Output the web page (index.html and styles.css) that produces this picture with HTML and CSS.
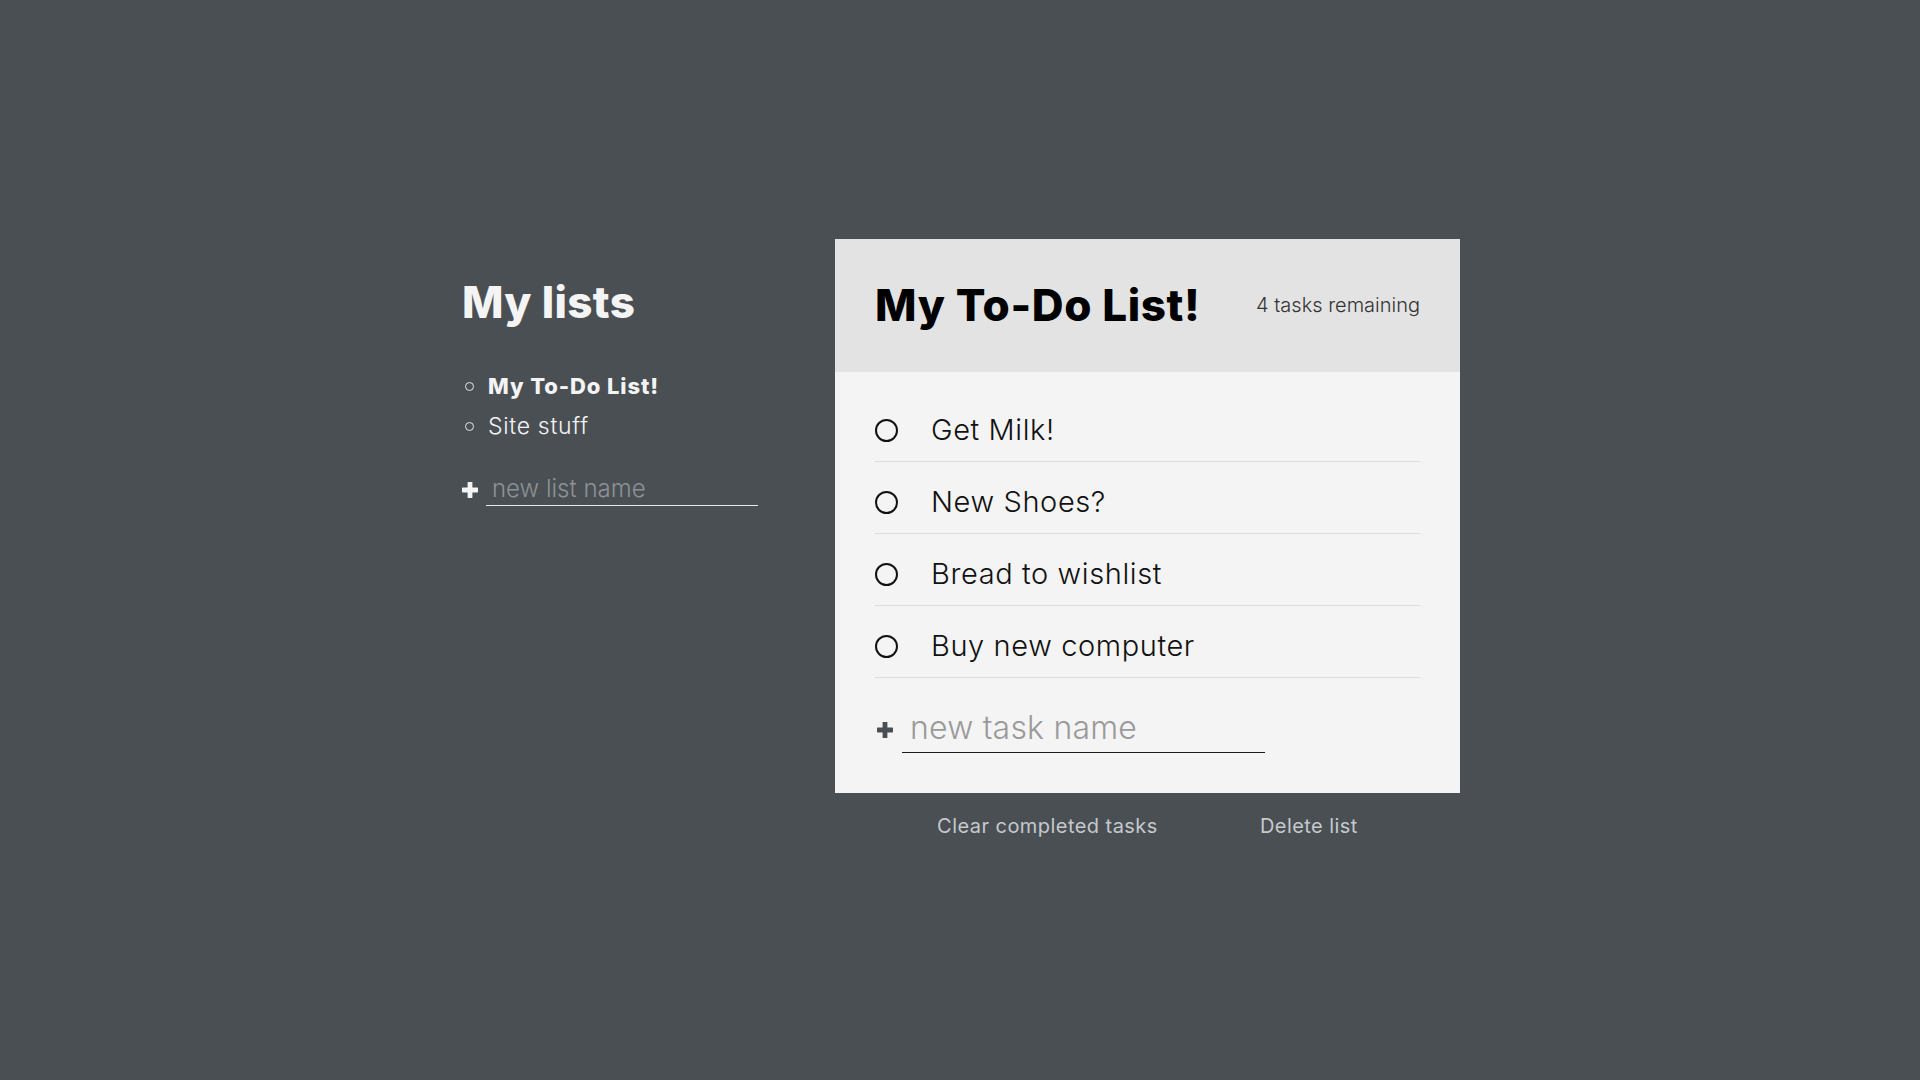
FILE: index.html
```html
<!DOCTYPE html>
<html lang="en">
<head>
<meta charset="utf-8">
<title>To-Do</title>
<link rel="stylesheet" href="styles.css">
</head>
<body>
<div class="app">
  <aside class="lists">
    <h2 class="lists-title">My lists</h2>
    <ul class="list-nav">
      <li class="list-item active">My To-Do List!</li>
      <li class="list-item">Site stuff</li>
    </ul>
    <form class="new-form new-list">
      <span class="plus plus-light"><svg viewBox="0 0 16 16" width="16" height="16"><rect x="5.6" y="0" width="4.8" height="16" rx="0.6"/><rect x="0" y="5.6" width="16" height="4.8" rx="0.6"/></svg></span>
      <input class="new-input list-input" type="text" placeholder="new list name">
    </form>
  </aside>

  <main class="todo">
    <div class="card">
      <header class="card-header">
        <h1 class="card-title">My To-Do List!</h1>
        <p class="remaining">4 tasks remaining</p>
      </header>
      <div class="card-body">
        <div class="task"><span class="check"></span><span class="task-name">Get Milk!</span></div>
        <div class="task"><span class="check"></span><span class="task-name">New Shoes?</span></div>
        <div class="task"><span class="check"></span><span class="task-name">Bread to wishlist</span></div>
        <div class="task"><span class="check"></span><span class="task-name">Buy new computer</span></div>
        <form class="new-form new-task">
          <span class="plus plus-dark"><svg viewBox="0 0 16 16" width="16" height="16"><rect x="5.6" y="0" width="4.8" height="16" rx="0.6"/><rect x="0" y="5.6" width="16" height="4.8" rx="0.6"/></svg></span>
          <input class="new-input task-input" type="text" placeholder="new task name">
        </form>
      </div>
    </div>
    <div class="actions">
      <button class="action" type="button">Clear completed tasks</button>
      <button class="action" type="button">Delete list</button>
    </div>
  </main>
</div>
</body>
</html>
```

FILE: styles.css
```css
* { box-sizing: border-box; }

html, body {
  margin: 0;
  padding: 0;
}

body {
  background: #4a4f54;
  font-family: Inter, "Open Sans", "Liberation Sans", sans-serif;
  color: #f4f4f4;
  min-height: 1080px;
}

.app {
  display: flex;
  justify-content: center;
  align-items: flex-start;
  padding-top: 239px;
  padding-left: 2px;
}

/* left column */
.lists {
  width: 373px;
  flex: none;
}

.lists-title {
  margin: 41px 0 0;
  font-size: 44px;
  line-height: 44px;
  font-weight: 800;
  letter-spacing: 0.3px;
  color: #f4f4f4;
}

.list-nav {
  list-style: none;
  margin: 42px 0 0;
  padding: 0;
}

.list-item {
  display: flex;
  align-items: center;
  gap: 14px;
  font-size: 23px;
  line-height: 40px;
  font-weight: 300;
  letter-spacing: 0.7px;
  padding-left: 3px;
}

.list-item::before {
  content: "";
  width: 7px;
  height: 7px;
  border: 1px solid #e6e6e6;
  border-radius: 50%;
  flex: none;
}

.list-item.active {
  font-weight: 800;
  font-size: 22px;
  letter-spacing: 0.9px;
}

.new-form {
  display: flex;
  align-items: center;
}

.new-list {
  margin-top: 27px;
  gap: 8px;
}

.plus {
  display: flex;
  width: 16px;
  height: 16px;
  flex: none;
}

.plus-light svg { fill: #f4f4f4; }
.plus-dark svg { fill: #4a4f54; }

.new-input {
  border: none;
  outline: none;
  background: transparent;
  font-family: inherit;
  font-weight: 300;
}

.list-input {
  width: 272px;
  font-size: 24px;
  line-height: 28px;
  height: 33px;
  padding: 1px 6px 3px;
  color: #f4f4f4;
  border-bottom: 1px solid #e8e8e8;
}

.list-input::placeholder { color: #8d9297; }

/* card */
.todo {
  width: 625px;
  flex: none;
}

.card {
  background: #f4f4f4;
  color: #000;
}

.card-header {
  background: #e3e3e3;
  display: flex;
  align-items: center;
  justify-content: space-between;
  padding: 44px 40px 45px;
}

.card-title {
  margin: 0;
  font-size: 44px;
  line-height: 44px;
  font-weight: 800;
  letter-spacing: 0.6px;
}

.remaining {
  margin: 0;
  font-size: 20px;
  line-height: 24px;
  font-weight: 300;
  color: #333;
}

.card-body {
  padding: 18px 40px 40px;
}

.task {
  display: flex;
  align-items: center;
  padding-top: 9px;
  height: 72px;
  border-bottom: 1px solid #dcdcdc;
}

.check {
  width: 23px;
  height: 23px;
  border: 2px solid #111;
  border-radius: 50%;
  flex: none;
  margin-right: 33px;
}

.task-name {
  font-size: 29px;
  line-height: 36px;
  font-weight: 300;
  letter-spacing: 0.6px;
  color: #111;
}

.new-task {
  margin-top: 29px;
  gap: 9px;
  padding-left: 2px;
}

.task-input {
  width: 363px;
  font-size: 32px;
  line-height: 36px;
  height: 46px;
  padding: 2px 8px 7px;
  letter-spacing: 0.2px;
  color: #111;
  border-bottom: 1px solid #1a1a1a;
}

.task-input::placeholder { color: #9a9a9a; }

/* actions */
.actions {
  display: flex;
  justify-content: space-evenly;
  margin-top: 21px;
}

.action {
  background: none;
  border: none;
  padding: 0;
  font-family: inherit;
  font-size: 20px;
  line-height: 24px;
  font-weight: 400;
  letter-spacing: 0.45px;
  color: #c5c9cc;
  cursor: pointer;
}
```
